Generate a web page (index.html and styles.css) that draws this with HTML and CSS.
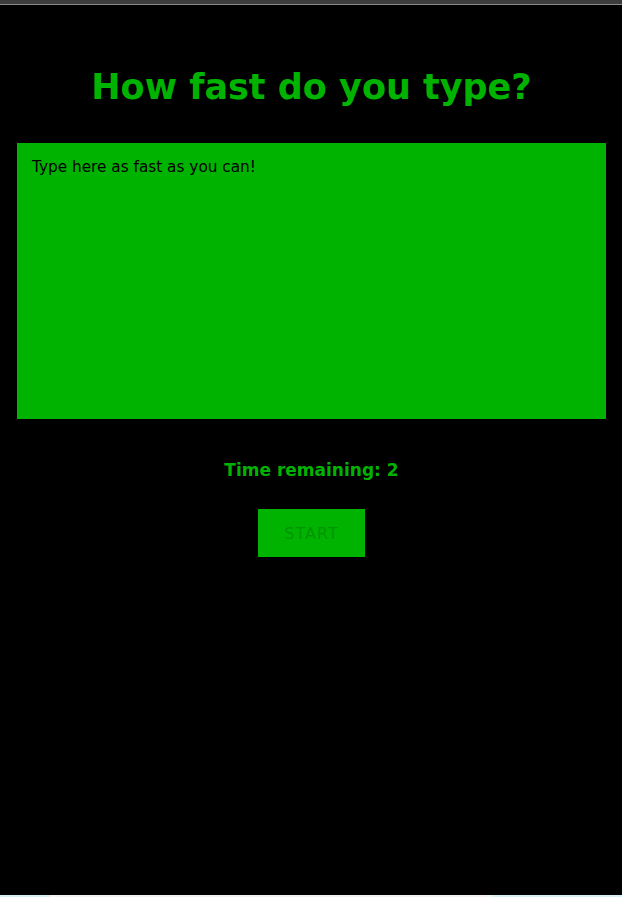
FILE: index.html
```
<!DOCTYPE html>
<html>
<head>
<meta charset="utf-8">
<link rel="stylesheet" href="styles.css">
</head>
<body>
<div class="chrome"></div>
<main class="app">
  <h1 class="title">How fast do you type?</h1>
  <textarea class="typing" placeholder="Type here as fast as you can!"></textarea>
  <p class="timer">Time remaining: 2</p>
  <button class="start">START</button>
</main>
<div class="bottom-strip"><span class="bs-left"></span><span class="bs-mid"></span><span class="bs-right"></span></div>
</body>
</html>
```
FILE: styles.css
```
html, body {
  margin: 0;
  padding: 0;
  background: #000;
  height: 100%;
}
body {
  display: flex;
  flex-direction: column;
  font-family: "Comic Sans MS", "DejaVu Sans", sans-serif;
}
.chrome {
  height: 4px;
  background: #3c3c3c;
  border-bottom: 1px solid #8a8a8a;
  flex: none;
}
.app {
  flex: 1;
  display: flex;
  flex-direction: column;
  align-items: center;
  padding: 0 16px 0 17px;
}
.title {
  margin: 60px 0 0;
  color: #00b300;
  font-size: 35px;
  font-weight: bold;
  line-height: 44px;
  letter-spacing: 0;
}
.typing {
  margin-top: 34px;
  width: 100%;
  height: 276px;
  box-sizing: border-box;
  background: #00b300;
  border: none;
  padding: 15px 15px;
  resize: none;
  font-family: inherit;
  font-size: 15.3px;
  color: #000;
  outline: none;
}
.typing::placeholder {
  color: #000;
  opacity: 1;
}
.timer {
  margin: 38px 0 0;
  color: #00b300;
  font-size: 17px;
  font-weight: bold;
  line-height: 26px;
}
.start {
  margin-top: 26px;
  width: 107px;
  height: 48px;
  background: #00b300;
  border: none;
  color: #009300;
  font-family: inherit;
  font-size: 16px;
  letter-spacing: 1px;
  padding: 0;
}
.bottom-strip {
  flex: none;
  height: 2px;
  display: flex;
}
.bs-left { width: 50px; background: #d6eef5; }
.bs-mid { flex: 1; background: #f2f2f2; }
.bs-right { width: 130px; background: #d6eef5; }
```
